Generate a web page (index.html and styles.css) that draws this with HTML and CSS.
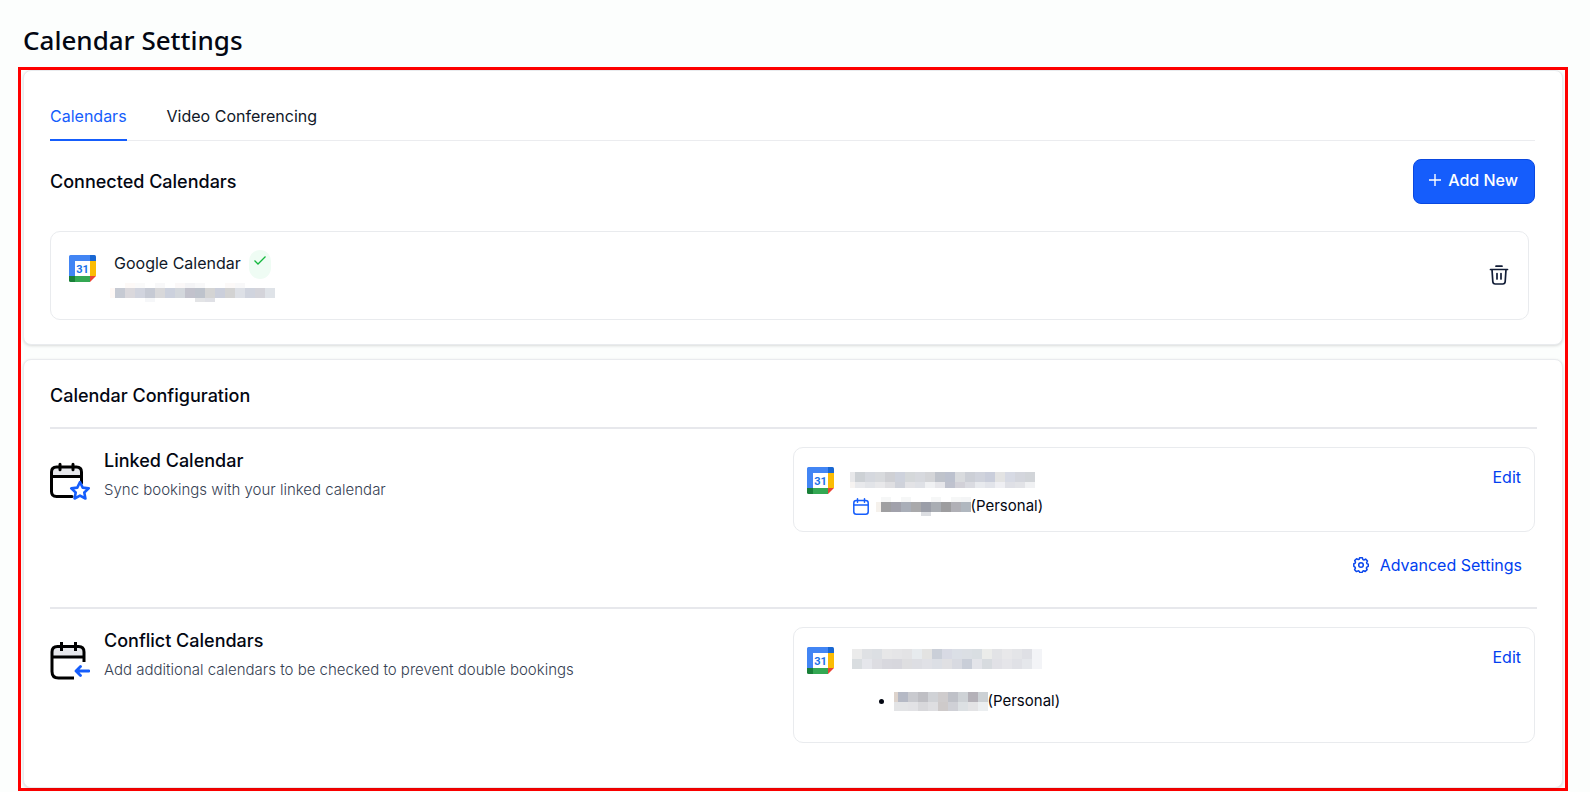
FILE: index.html
```html
<!DOCTYPE html>
<html lang="en">
<head>
  <meta charset="UTF-8">
  <meta name="viewport" content="width=device-width, initial-scale=1.0">
  <title>Calendar Settings</title>
  <link rel="stylesheet" href="styles.css">
</head>
<body>
  <h1>Calendar Settings</h1>

  <main class="frame">
    <section class="card">
      <nav class="tabs">
        <a class="tab active" href="#calendars">Calendars</a>
        <a class="tab" href="#video">Video Conferencing</a>
      </nav>

      <div class="card-head">
        <h2>Connected Calendars</h2>
        <button class="add-btn" type="button">
          <svg width="12" height="12" viewBox="0 0 12 12"><path d="M6 0v12M0 6h12" stroke="#fff" stroke-width="1.400"/></svg>
          Add New
        </button>
      </div>

      <div class="account">
        <svg class="gcal" viewBox="0 0 27 27">
          <path fill="#4285f4" d="M1.500 0H21v6H6v15H0V1.500Q0 0 1.500 0z"/>
          <path fill="#1967d2" d="M21 0h4.500Q27 0 27 1.500V6h-6z"/>
          <path fill="#fbbc04" d="M21 6h6v15h-6z"/>
          <path fill="#34a853" d="M6 21h15v6H6z"/>
          <path fill="#188038" d="M0 21h6v6H1.500Q0 27 0 25.500z"/>
          <path fill="#ea4335" d="M21 21h6l-6 6z"/>
          <text x="13.500" y="18" text-anchor="middle">31</text>
        </svg>
        <div class="account-info">
          <div class="account-name">
            <span>Google Calendar</span>
            <span class="check"><svg width="12" height="9" viewBox="0 0 12 9"><path d="M.5 4.500l3.500 3.500L11.500.5" fill="none" stroke="#12b83c" stroke-width="1.300"/></svg></span>
          </div>
          <svg class="mask" data-mask="account"></svg>
        </div>
        <button class="icon-btn" type="button" aria-label="Delete">
          <svg width="20" height="20" viewBox="0 0 20 20" fill="none" stroke="#111c36" stroke-width="1.700" stroke-linecap="round" stroke-linejoin="round"><path d="M7 1.200h6M1.500 4.500h17M3 4.500l.8 12q.2 2.500 2.500 2.500h7.400q2.300 0 2.500-2.500l.8-12M8 8.500v5.500M12 8.500v5.500"/></svg>
        </button>
      </div>
    </section>

    <section class="card config">
      <h2>Calendar Configuration</h2>

      <div class="row linked">
        <div class="row-info">
          <svg width="40" height="40" viewBox="0 0 40 40" fill="none" stroke-linecap="round" stroke-linejoin="round">
            <path d="M1.500 16v-5q0-5 5-5h20q5 0 5 5v5z" fill="#e7e8ec"/>
            <path d="M22 35.500H6.500q-5 0-5-5V11q0-5 5-5h20q5 0 5 5v11M1.500 15.500h30M10 3.200v5.500M23 3.200v5.500" stroke="#000" stroke-width="3"/>
            <path d="M30 21l2.700 5.600 6 .8-4.400 4.100 1.100 6-5.400-2.900-5.400 2.900 1.100-6-4.400-4.100 6-.8z" fill="#fff" stroke="#155dfc" stroke-width="2.600"/>
          </svg>
          <div>
            <h3>Linked Calendar</h3>
            <p>Sync bookings with your linked calendar</p>
          </div>
        </div>
        <div class="box">
          <svg class="gcal" viewBox="0 0 27 27">
            <path fill="#4285f4" d="M1.500 0H21v6H6v15H0V1.500Q0 0 1.500 0z"/>
            <path fill="#1967d2" d="M21 0h4.500Q27 0 27 1.500V6h-6z"/>
            <path fill="#fbbc04" d="M21 6h6v15h-6z"/>
            <path fill="#34a853" d="M6 21h15v6H6z"/>
            <path fill="#188038" d="M0 21h6v6H1.500Q0 27 0 25.500z"/>
            <path fill="#ea4335" d="M21 21h6l-6 6z"/>
            <text x="13.500" y="18" text-anchor="middle">31</text>
          </svg>
          <div class="box-info">
            <svg class="mask" data-mask="linked"></svg>
            <div class="calendar-line">
              <svg width="16" height="17" viewBox="0 0 16 17" fill="none" stroke="#155dfc" stroke-width="1.500" stroke-linecap="round"><rect x=".8" y="2.500" width="14.400" height="13.700" rx="2.500"/><path d="M1 7h14M4.500.8v3.500M11.500.8v3.500"/></svg>
              <div class="calendar-name"><svg class="mask" data-mask="linkedName"></svg><span>(Personal)</span></div>
            </div>
          </div>
          <button class="link-btn" type="button">Edit</button>
        </div>
        <button class="link-btn advanced" type="button">
          <svg width="16" height="16" viewBox="0 0 16 16" fill="none" stroke="#0b47ec" stroke-width="1.500" stroke-linejoin="round"><path d="M6.600.8h2.800l.5 1.800 1 .4 1.700-.9 1.900 1.900-.9 1.700.4 1 1.300.4v2.200l-1.500.8-.4 1 .7 1.500-1.900 1.900-1.500-.7-1 .4-.6 1.300H6.800l-.7-1.300-1-.4-1.600.8-1.900-1.900.8-1.600-.4-1L.8 9.300V6.800l1.300-.6.4-1-.8-1.600 1.900-1.900 1.600.9 1-.4z"/><circle cx="8" cy="8" r="2.300"/></svg>
          Advanced Settings
        </button>
      </div>

      <div class="row conflict">
        <div class="row-info">
          <svg width="40" height="40" viewBox="0 0 40 40" fill="none" stroke-linecap="round" stroke-linejoin="round">
            <path d="M2 16v-5q0-5.500 5.500-5.500h21Q34 5.500 34 11v5z" fill="#e7e8ec"/>
            <path d="M24 37H8.500Q2 37 2 30.500V11q0-5.500 5.500-5.500h21Q34 5.500 34 11v10M2 16h32M11.500 1v9M25.500 1v9" stroke="#000" stroke-width="3" stroke-linecap="butt"/>
            <path d="M39 30H27M30.500 25.500L26 30l4.500 4.500" stroke="#155dfc" stroke-width="2.800"/>
          </svg>
          <div>
            <h3>Conflict Calendars</h3>
            <p>Add additional calendars to be checked to prevent double bookings</p>
          </div>
        </div>
        <div class="box">
          <svg class="gcal" viewBox="0 0 27 27">
            <path fill="#4285f4" d="M1.500 0H21v6H6v15H0V1.500Q0 0 1.500 0z"/>
            <path fill="#1967d2" d="M21 0h4.500Q27 0 27 1.500V6h-6z"/>
            <path fill="#fbbc04" d="M21 6h6v15h-6z"/>
            <path fill="#34a853" d="M6 21h15v6H6z"/>
            <path fill="#188038" d="M0 21h6v6H1.500Q0 27 0 25.500z"/>
            <path fill="#ea4335" d="M21 21h6l-6 6z"/>
            <text x="13.500" y="18" text-anchor="middle">31</text>
          </svg>
          <div class="box-info">
            <svg class="mask" data-mask="conflict"></svg>
            <ul>
              <li class="calendar-name"><svg class="mask" data-mask="conflictName"></svg><span>(Personal)</span></li>
            </ul>
          </div>
          <button class="link-btn" type="button">Edit</button>
        </div>
      </div>
    </section>
  </main>

  <script>
    // Hidden account names: first = width of first cell, rows = [height, colours]
    const masks = {
      account: { first: 5, rows: [
        [5, "- - fdf9f7 fafafa - f8f8f9 - fbf8f8 f4f4f6 f8f8f9 - - fcf9f8 f8f8f9 - - -"],
        [10, "fff9f6 c6cad3 dad8dc d1d4de c6cad4 d8d8da ccd1dd d3d7dc c2c2cc bec3cc d4d4d4 cbcfdb d3d3d3 dde0e6 d0d4de d4d4da dfe3e8"],
        [4, "- - - - f6f7f9 - - - - e3e4e6 dfe0e5 - - - - - -"]
      ] },
      linked: { first: 5, rows: [
        [10, "e8e8ea cdd1d5 d5d8de d8dadd cfd0d4 ced2dc d5d8da d7d9de d4d5d8 bfc3cb bcc1ce d9dbde cccfd6 d0d3dc cacedb e3e3e3 d7dae4 d4d6dd d2d5d9"],
        [6, "f6f3f1 e8e9ec e2e4e8 e8e8ea dfdfe2 cfd2da e3e3e6 dfe1e6 f0f1f3 e6e6ea bfc2ce d2d1d8 dadbe1 e8eaee e2e4ea efeff3 dfe0e6 e2e3e7 f0f1f3"]
      ] },
      linkedName: { first: 5, rows: [
        [5, "- f6f7f7 - f6f7f7 - - f6f7f7 - f6f7f7 f4f5f6"],
        [10, "f5f1ec 9f9fa1 a1a1ab a9aeb8 a9a9ab 9b9ea8 a9adb3 9d9d9f b0b0b6 b0b7bf"],
        [4, "- - - - - dcdee2 - - - -"]
      ] },
      conflict: { first: 10, rows: [
        [10, "ebebeb dfe1e4 dcdfe3 e7e7e8 e5e5e7 e3e3e5 e7ebee e3e3e2 cacfd8 d8dae4 dbdfe6 dbdfe4 d9dee2 ebecea e2e3e6 e8e8ea e4e5e8 dfe0e5 f3f4f7"],
        [10, "d9dde0 e5e6eb dddde2 d8d8de d7d7dd dedee0 dddee3 e0e1e6 dcdfe5 e0e0e3 d8dae1 c9ced8 e3e4e9 d7dbdf e1e1e6 e5e5e9 e0e1e6 e5e7eb f3f4f7"]
      ] },
      conflictName: { first: 4, rows: [
        [10, "ddd3cc b5b9c5 c9cacf bfbfc4 d0d2d6 cfcccd bfc1c8 ced2d6 b4b1b8 ccd1d5"],
        [9, "e3e4e6 e3e4e6 e2e2e5 d8d8db dedee1 cecaca cfd0d6 dce0e3 e3e3e5 ebeef0"]
      ] }
    };

    document.querySelectorAll("[data-mask]").forEach(svg => {
      const mask = masks[svg.dataset.mask];
      let y = 0;
      let width = 0;
      let rects = "";
      mask.rows.forEach(([height, colors]) => {
        let x = 0;
        colors.split(" ").forEach((color, i) => {
          const w = i === 0 ? mask.first : 10;
          if (color !== "-") {
            rects += `<rect x="${x}" y="${y}" width="${w}" height="${height}" fill="#${color}"/>`;
          }
          x += w;
        });
        width = x;
        y += height;
      });
      svg.setAttribute("width", width);
      svg.setAttribute("height", y);
      svg.innerHTML = rects;
    });
  </script>
</body>
</html>
```
FILE: styles.css
```css
* {
  box-sizing: border-box;
}

body {
  margin: 0;
  padding: 22px 22px 1px 18px;
  background-color: #fcfefd;
  color: #030712;
  font-family: Inter, sans-serif;
  font-size: 16px;
  line-height: 24px;
}

h1, h2, h3, p, ul {
  margin: 0;
}

h1 {
  padding: 0 5px 9px;
  font-family: "Noto Sans", sans-serif;
  font-size: 26px;
  font-weight: 500;
  line-height: 36px;
}

h2, h3 {
  font-size: 18px;
  font-weight: 500;
  line-height: 28px;
}

svg {
  display: block;
  flex-shrink: 0;
}

button {
  font: inherit;
  cursor: pointer;
}

.frame {
  display: flex;
  flex-direction: column;
  gap: 14px;
  border: 3px solid #ff0000;
  padding: 0 2px;
}

.card {
  padding: 33px 27px 24px 26px;
  background-color: white;
  border: 1px solid #e9ebee;
  border-radius: 8px;
  box-shadow: 0 1px 3px rgba(0, 0, 0, 0.14);
}

.tabs {
  display: flex;
  gap: 40px;
  border-bottom: 1px solid #ebecef;
}

.tab {
  padding-bottom: 11px;
  margin-bottom: -1px;
  border-bottom: 2px solid transparent;
  color: #101828;
  text-decoration: none;
}

.tab.active {
  color: #155dfc;
  border-bottom-color: #155dfc;
}

.card-head {
  display: flex;
  justify-content: space-between;
  align-items: center;
  padding: 18px 0 27px;
}

.add-btn {
  display: flex;
  align-items: center;
  gap: 7px;
  padding: 0 16px 3px 15px;
  height: 45px;
  background-color: #155dfc;
  border: 1px solid #0a48e0;
  border-radius: 8px;
  color: white;
  font-weight: 500;
}

.account {
  display: flex;
  align-items: flex-start;
  gap: 18px;
  margin-right: 6px;
  padding: 18px 19px 18px 18px;
  height: 89px;
  border: 1px solid #e9ebee;
  border-radius: 10px;
}

.gcal {
  width: 27px;
  height: 27px;
}

.account .gcal {
  margin-top: 5px;
}

.gcal text {
  font-family: Roboto, sans-serif;
  font-size: 11px;
  font-weight: 700;
  fill: #1a73e8;
}

.account-info {
  flex: 1;
}

.account-name {
  display: flex;
  gap: 8px;
  color: #101828;
  line-height: 26px;
}

.account-info .mask {
  margin: 4px 0 0 -4px;
}

.check {
  display: flex;
  justify-content: center;
  padding-top: 6px;
  width: 22px;
  height: 29px;
  background-color: #effcf4;
  border-radius: 11px;
}

.icon-btn {
  padding: 15px 0 0;
  background: none;
  border: none;
}

.mask {
  shape-rendering: crispEdges;
}

.config {
  padding-top: 22px;
  padding-bottom: 44px;
}

.config h2 {
  padding-bottom: 17px;
}

.row {
  display: grid;
  grid-template-columns: 1fr 1fr;
  margin-right: -2px;
  padding: 18px 2px 0 0;
  border-top: 2px solid #e7e8ec;
}

.row-info {
  display: flex;
  gap: 14px;
}

.row-info > svg {
  margin-top: 14px;
}

.row-info p {
  padding-top: 3px;
  color: #364153;
  font-size: 15px;
  font-weight: 300;
}

.box {
  display: flex;
  align-items: flex-start;
  gap: 16px;
  padding: 17px 13px;
  border: 1px solid #e9ebee;
  border-radius: 10px;
}

.box .gcal {
  margin-top: 2px;
}

.box-info {
  flex: 1;
  font-size: 15px;
}

.linked .box {
  height: 85px;
}

.linked .box-info {
  padding-top: 7px;
}

.conflict .box {
  height: 116px;
}

.conflict .box-info {
  padding: 4px 0 0 2px;
}

.calendar-line {
  display: flex;
  align-items: center;
  gap: 7px;
  padding: 6px 0 0 3px;
}

.calendar-name {
  display: flex;
  align-items: center;
}

.box-info ul {
  padding: 20px 0 0 27px;
  list-style: none;
}

.box-info li::before {
  content: "";
  width: 5px;
  height: 5px;
  margin-right: 10px;
  background-color: #030712;
  border-radius: 50%;
}

.link-btn {
  padding: 0;
  background: none;
  border: none;
  color: #0040f0;
}

.advanced {
  grid-column: 2;
  justify-self: end;
  display: flex;
  align-items: center;
  gap: 11px;
  padding: 21px 13px 30px 0;
}
```
